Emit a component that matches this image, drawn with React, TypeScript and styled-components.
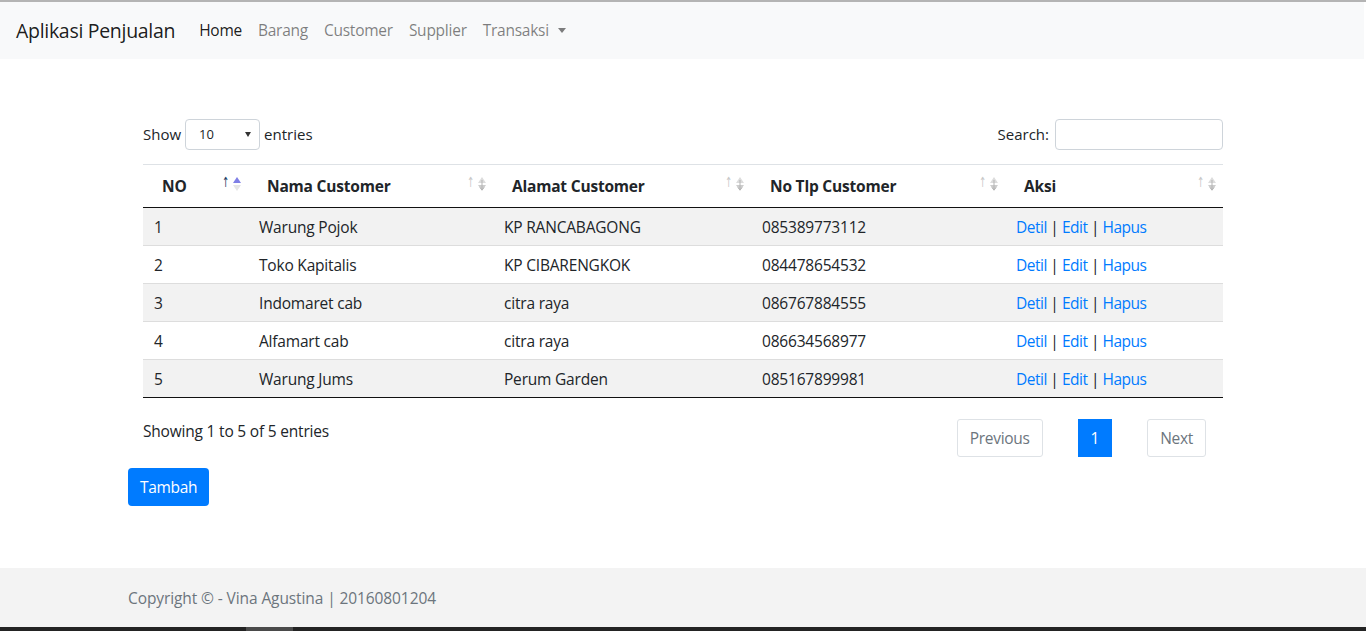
import styled, { createGlobalStyle } from "styled-components";

const GlobalStyle = createGlobalStyle`
    html, body {
        margin: 0;
        padding: 0;
        background: #fff;
    }
    body {
        font-family: "Open Sans", "Noto Sans", "Liberation Sans", sans-serif;
        font-size: 16px;
        color: #212529;
        line-height: 1.5;
    }
    * {
        box-sizing: border-box;
    }
`;

interface Customer {
    no: number;
    nama: string;
    alamat: string;
    telp: string;
}

const customers: Customer[] = [
    { no: 1, nama: "Warung Pojok", alamat: "KP RANCABAGONG", telp: "085389773112" },
    { no: 2, nama: "Toko Kapitalis", alamat: "KP CIBARENGKOK", telp: "084478654532" },
    { no: 3, nama: "Indomaret cab", alamat: "citra raya", telp: "086767884555" },
    { no: 4, nama: "Alfamart cab", alamat: "citra raya", telp: "086634568977" },
    { no: 5, nama: "Warung Jums", alamat: "Perum Garden", telp: "085167899981" },
];

const columns = [
    { label: "NO", width: 105, active: true },
    { label: "Nama Customer", width: 245 },
    { label: "Alamat Customer", width: 258 },
    { label: "No Tlp Customer", width: 254 },
    { label: "Aksi", width: 218 },
];

function SortIcon({ active }: { active?: boolean }) {
    return (
        <SortWrap>
            <ThinArrow active={active}>↑</ThinArrow>
            <svg width="12" height="16" viewBox="0 0 12 16">
                <path d="M6 1 L10 7 L2 7 Z" fill={active ? "#7f7fe6" : "#dcdcdc"} />
                <path d="M6 15 L10 9 L2 9 Z" fill={active ? "#e6e6e6" : "#cdcdcd"} />
                {!active && <path d="M6 4 L6 14 M4 11.5 L6 14 L8 11.5" stroke="#b5b5b5" strokeWidth="1" fill="none" />}
            </svg>
        </SortWrap>
    );
}

export default function App() {
    return (
        <>
            <GlobalStyle />
            <Page>
                <Navbar>
                    <Brand>Aplikasi Penjualan</Brand>
                    <NavList>
                        <NavLink active>Home</NavLink>
                        <NavLink>Barang</NavLink>
                        <NavLink>Customer</NavLink>
                        <NavLink>Supplier</NavLink>
                        <NavLink>
                            Transaksi <Caret />
                        </NavLink>
                    </NavList>
                </Navbar>

                <Container>
                    <TableArea>
                        <FilterRow>
                            <LengthLabel>
                                Show
                                <Select>
                                    <span>10</span>
                                    <SelectCaret />
                                </Select>
                                entries
                            </LengthLabel>
                            <SearchLabel>
                                Search:
                                <SearchInput type="search" />
                            </SearchLabel>
                        </FilterRow>

                        <Table>
                            <thead>
                                <tr>
                                    {columns.map((c) => (
                                        <Th key={c.label} style={{ width: c.width }}>
                                            {c.label}
                                            <SortIcon active={c.active} />
                                        </Th>
                                    ))}
                                </tr>
                            </thead>
                            <tbody>
                                {customers.map((c, i) => (
                                    <Tr key={c.no} striped={i % 2 === 0}>
                                        <Td>{c.no}</Td>
                                        <Td>{c.nama}</Td>
                                        <Td>{c.alamat}</Td>
                                        <Td>{c.telp}</Td>
                                        <ActionTd>
                                            <Link>Detil</Link> | <Link>Edit</Link> | <Link>Hapus</Link>
                                        </ActionTd>
                                    </Tr>
                                ))}
                            </tbody>
                        </Table>

                        <BottomRow>
                            <Info>Showing 1 to 5 of 5 entries</Info>
                            <Pagination>
                                <PageButton>Previous</PageButton>
                                <PageButton current>1</PageButton>
                                <PageButton>Next</PageButton>
                            </Pagination>
                        </BottomRow>
                    </TableArea>

                    <AddButton>Tambah</AddButton>
                </Container>

                <Footer>
                    <FooterText>Copyright © - Vina Agustina | 20160801204</FooterText>
                </Footer>
                <ScrollBar>
                    <ScrollThumb />
                </ScrollBar>
            </Page>
        </>
    );
}

const Page = styled.div`
    width: 1366px;
    height: 631px;
    overflow: hidden;
    border-top: 2px solid #b4b4b4;
    display: flex;
    flex-direction: column;
`;

const Navbar = styled.nav`
    height: 57px;
    background: #f8f9fa;
    display: flex;
    align-items: center;
    padding: 1px 16px 0;
    margin-right: 2px;
`;

const Brand = styled.a`
    font-size: 19.5px;
    color: rgba(0, 0, 0, 0.9);
    margin-right: 16px;
    letter-spacing: -0.3px;
`;

const NavList = styled.div`
    display: flex;
    align-items: center;
`;

const NavLink = styled.a<{ active?: boolean }>`
    padding: 8px 8px;
    font-size: 15.5px;
    color: ${({ active }) => (active ? "rgba(0,0,0,.9)" : "rgba(0,0,0,.5)")};
    display: flex;
    align-items: center;
    gap: 9px;
    letter-spacing: -0.25px;
`;

const Caret = styled.span`
    width: 0;
    height: 0;
    border-left: 4.5px solid transparent;
    border-right: 4.5px solid transparent;
    border-top: 5px solid rgba(0, 0, 0, 0.5);
    margin-top: -2px;
`;

const Container = styled.div`
    width: 1110px;
    margin: 60px auto 0;
`;

const TableArea = styled.div`
    padding: 0 15px;
`;

const FilterRow = styled.div`
    display: flex;
    justify-content: space-between;
    align-items: center;
    height: 31px;
    margin-bottom: 14px;
    font-size: 15px;
`;

const LengthLabel = styled.label`
    display: flex;
    align-items: center;
    gap: 4px;
`;

const Select = styled.div`
    width: 75px;
    height: 31px;
    border: 1px solid #ced4da;
    border-radius: 4px;
    display: flex;
    align-items: center;
    justify-content: space-between;
    padding: 0 8px 0 13px;
    font-size: 13px;
    background: #fff;
`;

const SelectCaret = styled.span`
    width: 0;
    height: 0;
    border-left: 3px solid transparent;
    border-right: 3px solid transparent;
    border-top: 5px solid #333;
`;

const SearchLabel = styled.label`
    display: flex;
    align-items: center;
    gap: 6px;
`;

const SearchInput = styled.input`
    width: 168px;
    height: 31px;
    border: 1px solid #ced4da;
    border-radius: 4px;
    outline: none;
    background: #fff;
`;

const Table = styled.table`
    width: 1080px;
    border-collapse: collapse;
    table-layout: fixed;
    border-bottom: 1px solid #111;
`;

const Th = styled.th`
    position: relative;
    text-align: left;
    font-weight: 700;
    height: 43px;
    padding: 1px 18px 0 19px;
    border-top: 1px solid #dee2e6;
    border-bottom: 1px solid #111;
    font-size: 15.5px;
    letter-spacing: -0.2px;
`;

const SortWrap = styled.span`
    position: absolute;
    right: 5px;
    top: 11px;
    display: flex;
    align-items: flex-start;
    gap: 1px;
`;

const ThinArrow = styled.span<{ active?: boolean }>`
    font-size: 14px;
    line-height: 13px;
    font-weight: 400;
    font-family: "DejaVu Sans", sans-serif;
    color: ${({ active }) => (active ? "#1d3d62" : "#c8c8c8")};
    transform: scaleX(0.6);
    margin-right: -2px;
`;

const Tr = styled.tr<{ striped?: boolean }>`
    background: ${({ striped }) => (striped ? "#f2f2f2" : "#fff")};
    border-top: 1px solid #ddd;
    &:first-child {
        border-top: none;
    }
`;

const Td = styled.td`
    height: 38px;
    padding: 2px 10px 0 11px;
    font-size: 15.5px;
    letter-spacing: -0.2px;
    white-space: nowrap;
`;

const ActionTd = styled(Td)`
    letter-spacing: -0.5px;
`;

const Link = styled.a`
    color: #007bff;
    cursor: pointer;
`;

const BottomRow = styled.div`
    display: flex;
    justify-content: space-between;
    align-items: flex-start;
    padding-top: 21px;
`;

const Info = styled.div`
    font-size: 15.5px;
    letter-spacing: -0.2px;
    line-height: 24px;
`;

const Pagination = styled.div`
    display: flex;
    gap: 35px;
    margin-right: 17px;
`;

const PageButton = styled.a<{ current?: boolean }>`
    height: 38px;
    padding: 1px 12px 0;
    display: flex;
    align-items: center;
    border: 1px solid ${({ current }) => (current ? "#007bff" : "#dee2e6")};
    border-radius: ${({ current }) => (current ? "0" : "3px")};
    background: ${({ current }) => (current ? "#007bff" : "#fff")};
    color: ${({ current }) => (current ? "#fff" : "#6c757d")};
    font-size: 15.5px;
    letter-spacing: -0.3px;
`;

const AddButton = styled.button`
    margin-top: 11px;
    height: 38px;
    padding: 0 12px;
    background: #007bff;
    color: #fff;
    border: none;
    border-radius: 4px;
    font-family: inherit;
    font-size: 15.5px;
    letter-spacing: -0.3px;
`;

const Footer = styled.footer`
    margin-top: 62px;
    height: 59px;
    background: #f3f3f3;
    display: flex;
    align-items: center;
`;

const FooterText = styled.div`
    width: 1110px;
    margin: 0 auto;
    padding-top: 2px;
    color: #6c757d;
    font-size: 15.5px;
    letter-spacing: -0.1px;
`;

const ScrollBar = styled.div`
    height: 4px;
    background: #232323;
    padding-left: 246px;
`;

const ScrollThumb = styled.div`
    width: 47px;
    height: 4px;
    background: #4a4a4a;
`;
